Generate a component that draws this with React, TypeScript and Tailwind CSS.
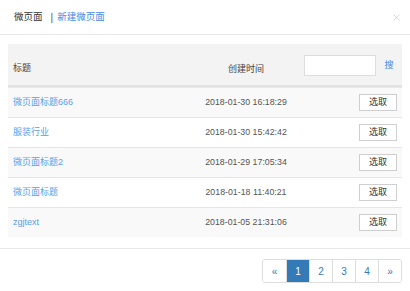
import { X } from "lucide-react";

const ROWS = [
  { title: "微页面标题666", time: "2018-01-30 16:18:29" },
  { title: "服装行业", time: "2018-01-30 15:42:42" },
  { title: "微页面标题2", time: "2018-01-29 17:05:34" },
  { title: "微页面标题", time: "2018-01-18 11:40:21" },
  { title: "zgjtext", time: "2018-01-05 21:31:06" },
];

const PAGES = ["«", "1", "2", "3", "4", "»"];

export default function App() {
  return (
    <div className="flex h-[291px] w-[410px] flex-col bg-white font-['Liberation_Sans','Noto_Sans_CJK_SC',sans-serif] text-[#333]">
      {/* header */}
      <div className="flex h-[35px] items-center border-b border-[#e8e8e8] pl-[14px] pr-[8px]">
        <span className="text-[9.5px] text-[#333]">微页面</span>
        <span className="ml-[8px] mr-[4px] text-[10px] text-[#555]">|</span>
        <span className="text-[9.5px] text-[#3f8ae6]">新建微页面</span>
        <X className="ml-auto h-[11px] w-[11px] text-[#c8c8c8]" strokeWidth={1.5} />
      </div>

      {/* table */}
      <div className="mx-[8px] mt-[9px] text-[9px]">
        <div className="grid h-[43px] grid-cols-[180px_116px_98px] border-b-2 border-[#e2e2e2] bg-[#f3f3f3]">
          <div className="flex items-end pb-[10px] pl-[5px] text-[#444]">标题</div>
          <div className="flex items-end justify-center pb-[9px] text-[#444]">创建时间</div>
          <div className="flex items-center pt-[2px]">
            <div className="h-[21px] w-[72px] border border-[#ddd] bg-white" />
            <div className="flex h-[21px] flex-1 items-center justify-center text-[#3f8ae6]">搜</div>
          </div>
        </div>
        {ROWS.map((r, i) => (
          <div
            key={r.time}
            className={`grid h-[30px] grid-cols-[180px_116px_98px] border-t border-[#e6e6e6] first:border-t-0 ${
              i % 2 === 0 ? "bg-[#f9f9f9]" : "bg-white"
            }`}
          >
            <div className="flex items-center pl-[5px] text-[#5b9ded]">{r.title}</div>
            <div className="flex items-center justify-center text-[8.8px] text-[#555]">{r.time}</div>
            <div className="flex items-center justify-end pr-[5px]">
              <button className="flex h-[17px] w-[38px] items-center justify-center border border-[#cfcfcf] bg-white text-[9px] text-[#333]">
                选取
              </button>
            </div>
          </div>
        ))}
      </div>

      {/* footer */}
      <div className="mt-auto flex h-[43px] justify-end border-t border-[#e8e8e8] pr-[8px] pt-[10px]">
        <div className="flex h-[24px] overflow-hidden rounded-[3px] border border-[#ddd]">
          {PAGES.map((p, i) => (
            <div
              key={p}
              className={`flex w-[23px] items-center justify-center text-[10px] ${
                i > 0 ? "border-l border-[#ddd]" : ""
              } ${p === "1" ? "bg-[#337ab7] text-white" : "bg-white text-[#337ab7]"}`}
            >
              {p}
            </div>
          ))}
        </div>
      </div>
    </div>
  );
}
